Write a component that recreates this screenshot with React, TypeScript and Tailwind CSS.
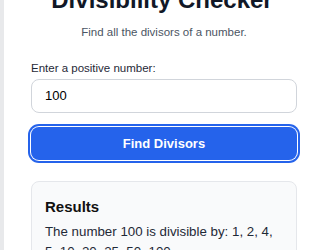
import React from "react";

export default function App() {
  return (
    <div
      className="w-[315px] h-[250px] overflow-hidden bg-[#e8e9eb] flex items-start"
      style={{ fontFamily: '"Liberation Sans", Arial, sans-serif' }}
    >
      <div className="ml-[4px] flex-1 bg-white pl-[27px] pr-[18px] flex flex-col pb-10">
        <h1 className="shrink-0 mt-[-14px] text-[24px] leading-[28px] font-bold text-[#111827] text-center pr-[4px]">
          Divisibility Checker
        </h1>
        <p className="shrink-0 mt-[10px] text-[11.5px] leading-[16px] text-[#4b5563] text-center">
          Find all the divisors of a number.
        </p>
        <label className="shrink-0 mt-[20px] text-[11.5px] leading-[16px] text-[#1f2937]">
          Enter a positive number:
        </label>
        <div className="shrink-0 mt-[3px] h-[34px] rounded-[8px] border border-[#d1d5db] flex items-center pl-[13px] text-[13px] text-black">
          100
        </div>
        <button className="shrink-0 mt-[14px] h-[33px] rounded-[8px] bg-[#2563eb] text-white font-bold text-[13px] ring-2 ring-[#2563eb] ring-offset-1 ring-offset-white">
          Find Divisors
        </button>
        <div className="shrink-0 mt-[21px] rounded-[8px] border border-[#e5e7eb] bg-[#f9fafb] pt-[15px] px-[13px] pb-4">
          <h2 className="text-[15px] leading-[20px] font-bold text-[#111111]">Results</h2>
          <p className="mt-[5px] text-[13.3px] leading-[20px] text-[#1f2937]">
            The number 100 is divisible by: 1, 2, 4, 5, 10, 20, 25, 50, 100.
          </p>
        </div>
      </div>
    </div>
  );
}
